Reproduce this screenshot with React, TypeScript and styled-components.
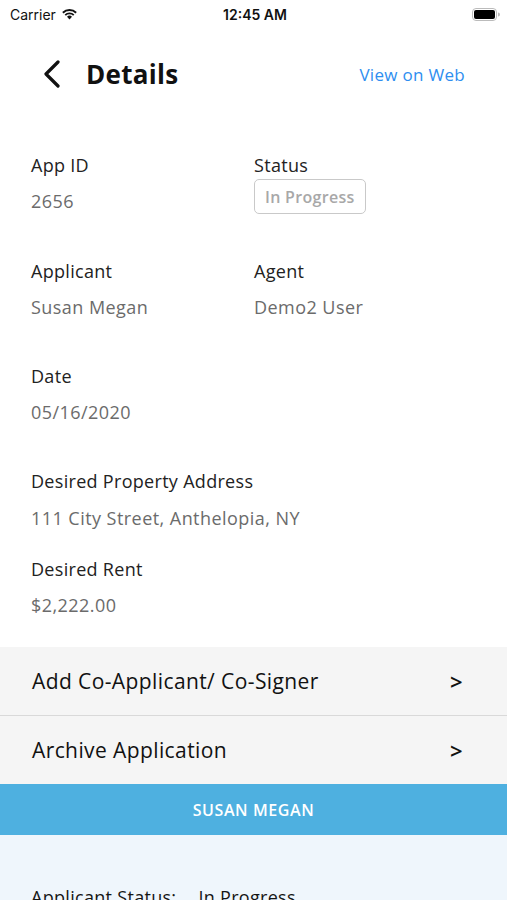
import React from "react";
import styled, { createGlobalStyle } from "styled-components";

const Global = createGlobalStyle`
  html, body { margin: 0; padding: 0; background: #ffffff; }
  body { font-family: "Open Sans", "Noto Sans", sans-serif; -webkit-font-smoothing: antialiased; }
  * { box-sizing: border-box; }
`;

const Screen = styled.div`
  width: 507px;
  height: 900px;
  overflow: hidden;
  display: flex;
  flex-direction: column;
  background: #ffffff;
  & > * { flex-shrink: 0; }
`;

const StatusBar = styled.div`
  height: 28px;
  display: grid;
  grid-template-columns: 1fr auto 1fr;
  align-items: center;
  padding: 0 7px 0 10px;
  font-family: "Inter", "Roboto", sans-serif;
  font-size: 14px;
  color: #111;
`;

const Carrier = styled.div`
  display: flex;
  align-items: center;
  gap: 5px;
`;

const Time = styled.div`
  font-weight: 600;
`;

const Battery = styled.div`
  justify-self: end;
  display: flex;
  align-items: center;
`;

const Header = styled.div`
  height: 92px;
  display: flex;
  align-items: center;
  padding: 0 42px 0 42px;
`;

const BackButton = styled.div`
  display: flex;
  align-items: center;
  width: 44px;
`;

const Title = styled.h1`
  margin: 0;
  font-size: 26px;
  font-weight: 700;
  letter-spacing: 0.3px;
  color: #111;
  flex: 1;
`;

const WebLink = styled.a`
  font-size: 17px;
  letter-spacing: 0.3px;
  color: #2e8ef0;
  text-decoration: none;
`;

const Fields = styled.div`
  display: grid;
  grid-template-columns: 223px 1fr;
  padding: 33px 31px 30px 31px;
  row-gap: 45px;
`;

const Field = styled.div<{ $span?: boolean; $tight?: boolean }>`
  display: flex;
  flex-direction: column;
  grid-column: ${(p) => (p.$span ? "1 / span 2" : "auto")};
  margin-top: ${(p) => (p.$tight ? "-18px" : "0")};
`;

const Label = styled.div`
  font-size: 18px;
  line-height: 24px;
  letter-spacing: 0.3px;
  color: #222;
`;

const Value = styled.div<{ $gap?: number }>`
  margin-top: ${(p) => p.$gap ?? 12}px;
  font-size: 18px;
  line-height: 24px;
  letter-spacing: 0.45px;
  color: #6b6b6b;
`;

const Badge = styled.div`
  margin-top: 2px;
  align-self: flex-start;
  height: 35px;
  padding: 0 10px;
  display: flex;
  align-items: center;
  border: 1.5px solid #c9c9c9;
  border-radius: 5px;
  font-size: 16px;
  font-weight: 600;
  letter-spacing: 0.3px;
  color: #a8a8a8;
`;

const ActionList = styled.div`
  background: #f5f5f5;
  display: flex;
  flex-direction: column;
`;

const ActionRow = styled.div<{ $divider?: boolean }>`
  height: 68px;
  display: flex;
  align-items: center;
  justify-content: space-between;
  padding: 0 44px 0 32px;
  font-size: 21px;
  letter-spacing: 0.4px;
  color: #111;
  border-bottom: ${(p) => (p.$divider ? "1px solid #d9d9d9" : "none")};
  box-sizing: content-box;
`;

const Chevron = styled.span`
  font-size: 22px;
  font-weight: 600;
`;

const NameBar = styled.div`
  height: 51px;
  background: #4eb0e0;
  color: #ffffff;
  display: flex;
  align-items: center;
  justify-content: center;
  font-size: 16px;
  font-weight: 600;
  letter-spacing: 0.6px;
`;

const Applicant = styled.div`
  flex: 1 0 auto;
  background: #eff6fc;
  padding: 50px 31px 0 31px;
  display: flex;
  gap: 22px;
  font-size: 18px;
  letter-spacing: 0.3px;
  color: #151515;
`;

const fields = [
  { label: "Applicant", value: "Susan Megan" },
  { label: "Agent", value: "Demo2 User" },
];

export default function App() {
  return (
    <Screen>
      <Global />
      <StatusBar>
        <Carrier>
          Carrier
          <svg width="17" height="12" viewBox="0 0 17 12">
            <path d="M8.5 11.5 L6 8.8 A3.6 3.6 0 0 1 11 8.8 Z" fill="#111" />
            <path d="M3.6 6.5 A7 7 0 0 1 13.4 6.5 L12.1 7.8 A5.2 5.2 0 0 0 4.9 7.8 Z" fill="#111" />
            <path d="M1.2 4.1 A10.4 10.4 0 0 1 15.8 4.1 L14.5 5.4 A8.6 8.6 0 0 0 2.5 5.4 Z" fill="#111" />
          </svg>
        </Carrier>
        <Time>12:45 AM</Time>
        <Battery>
          <svg width="28" height="13" viewBox="0 0 28 13">
            <rect x="0.5" y="0.5" width="24" height="12" rx="3.5" fill="none" stroke="#bbb" />
            <rect x="2" y="2" width="21" height="9" rx="2" fill="#000" />
            <path d="M26 4.5 A2 2 0 0 1 26 8.5 Z" fill="#bbb" />
          </svg>
        </Battery>
      </StatusBar>

      <Header>
        <BackButton>
          <svg width="20" height="28" viewBox="0 0 20 28">
            <polyline points="16,2 4,14 16,26" fill="none" stroke="#111" strokeWidth="3.2" strokeLinecap="round" strokeLinejoin="round" />
          </svg>
        </BackButton>
        <Title>Details</Title>
        <WebLink>View on Web</WebLink>
      </Header>

      <Fields>
        <Field>
          <Label>App ID</Label>
          <Value>2656</Value>
        </Field>
        <Field>
          <Label>Status</Label>
          <Badge>In Progress</Badge>
        </Field>
        {fields.map((f) => (
          <Field key={f.label}>
            <Label>{f.label}</Label>
            <Value>{f.value}</Value>
          </Field>
        ))}
        <Field $span>
          <Label>Date</Label>
          <Value>05/16/2020</Value>
        </Field>
        <Field $span>
          <Label>Desired Property Address</Label>
          <Value $gap={13}>111 City Street, Anthelopia, NY</Value>
        </Field>
        <Field $span $tight>
          <Label>Desired Rent</Label>
          <Value>$2,222.00</Value>
        </Field>
      </Fields>

      <ActionList>
        <ActionRow $divider>
          Add Co-Applicant/ Co-Signer
          <Chevron>&gt;</Chevron>
        </ActionRow>
        <ActionRow>
          Archive Application
          <Chevron>&gt;</Chevron>
        </ActionRow>
      </ActionList>

      <NameBar>SUSAN MEGAN</NameBar>

      <Applicant>
        <span>Applicant Status:</span>
        <span>In Progress</span>
      </Applicant>
    </Screen>
  );
}
